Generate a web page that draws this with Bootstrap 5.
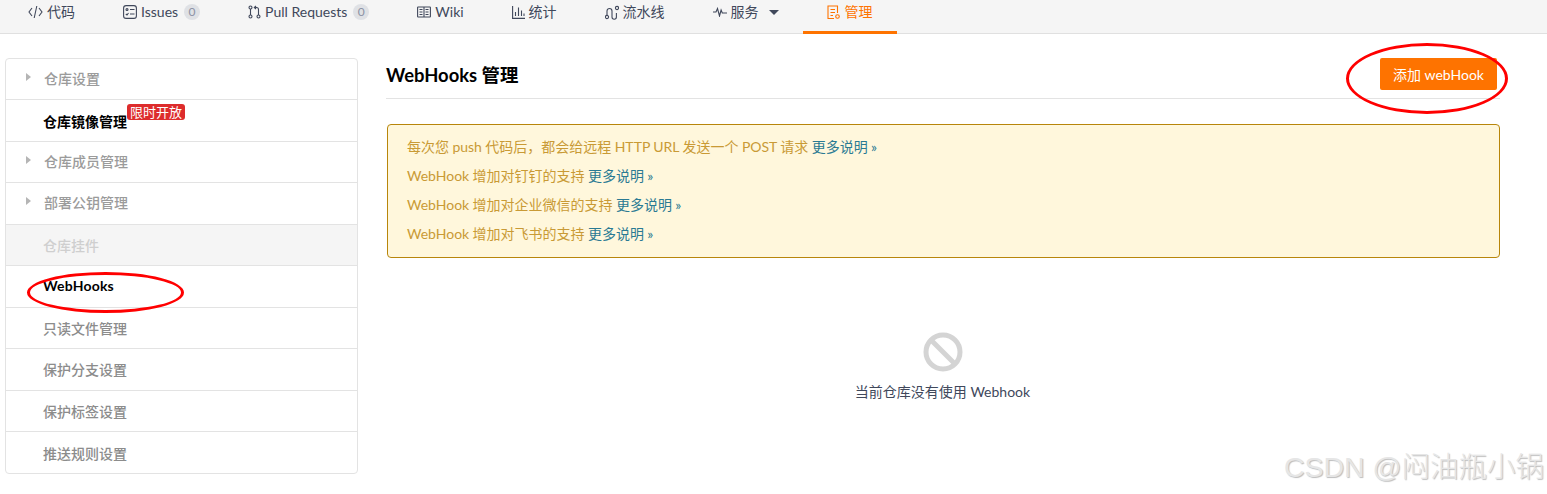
<!DOCTYPE html>
<html>

<head>
  <meta charset="utf-8">
  <meta name="viewport" content="width=device-width, initial-scale=1">
  <link href="https://cdn.jsdelivr.net/npm/bootstrap@5.3.3/dist/css/bootstrap.min.css" rel="stylesheet">
  <title>WebHooks 管理</title>
  <style>
    body {
      font-family: Lato, "Noto Sans CJK SC", sans-serif;
      font-size: 14px;
      height: 494px;
      overflow: hidden;
      position: relative;
      background: #fff;
    }

    .repo-nav {
      height: 34px;
      background: #f5f5f5;
      border-bottom: 1px solid #e0e0e0;
      padding-left: 4px;
    }

    .repo-tab {
      height: 34px;
      padding: 0 24px 10px;
      color: #40485b;
      font-size: 14px;
      line-height: 24px;
      gap: 4px;
      text-decoration: none;
      white-space: nowrap;
    }

    .repo-tab svg {
      flex: none;
    }

    .repo-tab.current {
      color: #fe7300;
      border-bottom: 3px solid #fe7300;
      padding-bottom: 7px;
    }

    .tab-count {
      width: 16px;
      height: 16px;
      border-radius: 50%;
      background: #dfe1e5;
      color: #8c92a4;
      font-size: 12px;
      line-height: 16px;
      text-align: center;
      margin-left: 2px;
    }

    .tab-caret {
      width: 0;
      height: 0;
      border-left: 5px solid transparent;
      border-right: 5px solid transparent;
      border-top: 5px solid #40485b;
      margin-left: 6px;
    }

    .page-body {
      padding: 24px 47px 0 5px;
      gap: 28px;
    }

    .side-menu {
      width: 353px;
      flex: none;
      border: 1px solid #e3e3e3;
      border-radius: 4px;
      height: 416px;
    }

    .side-item {
      height: 41.45px;
      border-bottom: 1px solid #e3e3e3;
      padding-left: 37px;
      padding-top: 1px;
      color: #8c8c8c;
      font-size: 14px;
      font-weight: 500;
      position: relative;
    }

    .side-item:last-child {
      border-bottom: 0;
    }

    .side-item.fold {
      padding-left: 38px;
      padding-top: 0;
      padding-bottom: 2px;
      color: #9b9b9b;
    }

    .side-item.fold::before {
      content: "";
      position: absolute;
      left: 20px;
      top: 14px;
      border-left: 5px solid #b5b5b5;
      border-top: 4px solid transparent;
      border-bottom: 4px solid transparent;
    }

    .side-item.picked {
      color: #000;
      font-weight: 700;
      padding-top: 2px;
    }

    .side-item.hooks {
      padding-top: 0;
      padding-bottom: 1px;
      letter-spacing: .2px;
    }

    .side-item.section {
      background: #f5f5f5;
      color: #cfcfcf;
    }

    .hot-tag {
      position: absolute;
      left: 121px;
      top: 4px;
      height: 16px;
      padding: 0 3px;
      background: #dd2c2c;
      color: #fff;
      border-radius: 3px;
      font-size: 13px;
      font-weight: 400;
      line-height: 16px;
    }

    .main-pane {
      flex: 1;
      min-width: 0;
    }

    .pane-head {
      height: 41px;
      border-bottom: 1px solid #e3e3e3;
      padding-right: 3px;
      padding-bottom: 8px;
    }

    .pane-head h1 {
      font-size: 18.4px;
      font-weight: 700;
      color: #000;
      margin: 2px 0 0;
    }

    .add-hook {
      background: #fe7300;
      border: 0;
      border-radius: 2px;
      color: #fff;
      font-size: 14px;
      width: 117px;
      height: 32px;
      padding: 0;
    }

    .hook-notes {
      margin: 25px 0 0 1px;
      height: 134px;
      width: 1113px;
      background: #fff7dc;
      border: 1px solid #b8860b;
      border-radius: 4px;
      padding: 7px 19px;
      color: #c99a35;
      font-size: 14px;
      word-spacing: -.2px;
    }

    .hook-notes p {
      height: 29px;
      line-height: 29px;
      margin: 0;
    }

    .hook-notes a {
      color: #2a7a93;
      text-decoration: none;
    }

    .empty-state {
      margin-top: 74px;
      margin-left: -1px;
      color: #40485b;
      font-size: 14px;
    }

    .empty-state span {
      margin-top: 10px;
      line-height: 20px;
    }

    .mark-ring {
      position: absolute;
      border: 3px solid #f00;
      border-radius: 50%;
      pointer-events: none;
    }

    .ring-add {
      left: 1346px;
      top: 43px;
      width: 162px;
      height: 71px;
    }

    .ring-hooks {
      left: 27px;
      top: 272px;
      width: 157px;
      height: 41px;
    }

    .csdn-mark {
      position: absolute;
      right: 3px;
      top: 448px;
      color: #e6e6e6;
      font-family: "Liberation Sans", "Noto Sans CJK SC", sans-serif;
      font-size: 28.5px;
      font-weight: 300;
      line-height: 38px;
      text-shadow: 1px 1px 1px #bdbdbd;
      white-space: nowrap;
    }
  </style>
</head>

<body>
  <!-- repo tabs -->
  <nav class="repo-nav d-flex">
    <a class="repo-tab d-flex align-items-center" href="#">
      <svg width="15" height="14" viewBox="0 0 15 14" fill="none" stroke="#40485b" stroke-width="1.1"><path d="M4 3 1 7l3 4M11 3l3 4-3 4M8.8 1 6.2 13"/></svg>
      代码
    </a>
    <a class="repo-tab d-flex align-items-center" href="#">
      <svg width="14" height="14" viewBox="0 0 14 14" fill="none" stroke="#40485b" stroke-width="1.1"><rect x=".6" y=".6" width="12.8" height="12.8" rx="2.5"/><path d="M7 4.5h4.5M7 9h4.5"/><circle cx="4" cy="4.5" r="1"/><path d="M2.8 9 4 10l1.5-2"/></svg>
      Issues
      <span class="tab-count">0</span>
    </a>
    <a class="repo-tab d-flex align-items-center" href="#">
      <svg width="13" height="14" viewBox="0 0 13 14" fill="none" stroke="#40485b" stroke-width="1.1"><circle cx="2.5" cy="2.5" r="1.5"/><circle cx="2.5" cy="11.5" r="1.5"/><circle cx="10.5" cy="11.5" r="1.5"/><path d="M2.5 4v6M10.5 10V4.5Q10.5 2.5 8.5 2.5H6.5M8 1 6.3 2.5 8 4"/></svg>
      Pull Requests
      <span class="tab-count">0</span>
    </a>
    <a class="repo-tab d-flex align-items-center" href="#">
      <svg width="14" height="12" viewBox="0 0 14 12" fill="none" stroke="#40485b" stroke-width="1.1"><rect x=".6" y="1" width="12.8" height="10" rx=".5"/><path d="M7 1v10M2.5 3.5h3M2.5 6h3M2.5 8.5h3M8.5 3.5h3M8.5 6h3M8.5 8.5h3"/></svg>
      Wiki
    </a>
    <a class="repo-tab d-flex align-items-center" href="#">
      <svg width="13" height="13" viewBox="0 0 13 13" fill="none" stroke="#40485b" stroke-width="1.1"><path d="M.6 0v12.4H13M3.5 10V6M6.5 10V1.5M9.5 10V4.5M12 10V7.5"/></svg>
      统计
    </a>
    <a class="repo-tab d-flex align-items-center" href="#">
      <svg width="14" height="15" viewBox="0 0 14 15" fill="none" stroke="#40485b" stroke-width="1.1"><circle cx="2" cy="12" r="1.6"/><circle cx="12" cy="3" r="1.6"/><path d="M2 10.4V6a2.5 2.5 0 0 1 5 0v6a2.2 2.2 0 0 0 4.4 0V8"/></svg>
      流水线
    </a>
    <a class="repo-tab d-flex align-items-center" href="#">
      <svg width="14" height="10" viewBox="0 0 14 10" fill="none" stroke="#40485b" stroke-width="1.1"><path d="M0 5h3l1.5-3.5L6.5 9l1.6-6 1.2 3H14"/></svg>
      服务
      <span class="tab-caret"></span>
    </a>
    <a class="repo-tab current d-flex align-items-center" href="#">
      <svg width="14" height="15" viewBox="0 0 14 15" fill="none" stroke="#fe7300" stroke-width="1.1"><path d="M7 13.5H1V1h9.5v7M3.5 4.5h4.5M3.5 7.5h4.5M3.5 10.5H6"/><circle cx="10.5" cy="11.5" r="1.8"/></svg>
      管理
    </a>
  </nav>

  <div class="page-body d-flex">
    <!-- side menu -->
    <div class="side-menu">
      <div class="side-item fold d-flex align-items-center">仓库设置</div>
      <div class="side-item picked d-flex align-items-center">仓库镜像管理<span class="hot-tag">限时开放</span></div>
      <div class="side-item fold d-flex align-items-center">仓库成员管理</div>
      <div class="side-item fold d-flex align-items-center">部署公钥管理</div>
      <div class="side-item section d-flex align-items-center">仓库挂件</div>
      <div class="side-item picked hooks d-flex align-items-center">WebHooks</div>
      <div class="side-item d-flex align-items-center">只读文件管理</div>
      <div class="side-item d-flex align-items-center">保护分支设置</div>
      <div class="side-item d-flex align-items-center">保护标签设置</div>
      <div class="side-item d-flex align-items-center">推送规则设置</div>
    </div>

    <div class="main-pane">
      <div class="pane-head d-flex justify-content-between align-items-center">
        <h1>WebHooks 管理</h1>
        <button type="button" class="add-hook">添加 webHook</button>
      </div>

      <div class="hook-notes">
        <p>每次您 push 代码后，都会给远程 HTTP URL 发送一个 POST 请求 <a href="#">更多说明 »</a></p>
        <p>WebHook 增加对钉钉的支持 <a href="#">更多说明 »</a></p>
        <p>WebHook 增加对企业微信的支持 <a href="#">更多说明 »</a></p>
        <p>WebHook 增加对飞书的支持 <a href="#">更多说明 »</a></p>
      </div>

      <div class="empty-state d-flex flex-column align-items-center">
        <svg width="40" height="40" viewBox="0 0 40 40" fill="none" stroke="#d4d4d4" stroke-width="5"><circle cx="20" cy="20" r="17"/><path d="M8 8l24 24"/></svg>
        <span>当前仓库没有使用 Webhook</span>
      </div>
    </div>
  </div>

  <div class="mark-ring ring-add"></div>
  <div class="mark-ring ring-hooks"></div>
  <div class="csdn-mark">CSDN @闷油瓶小锅</div>

  <script src="https://cdn.jsdelivr.net/npm/bootstrap@5.3.3/dist/js/bootstrap.bundle.min.js"></script>
</body>

</html>
